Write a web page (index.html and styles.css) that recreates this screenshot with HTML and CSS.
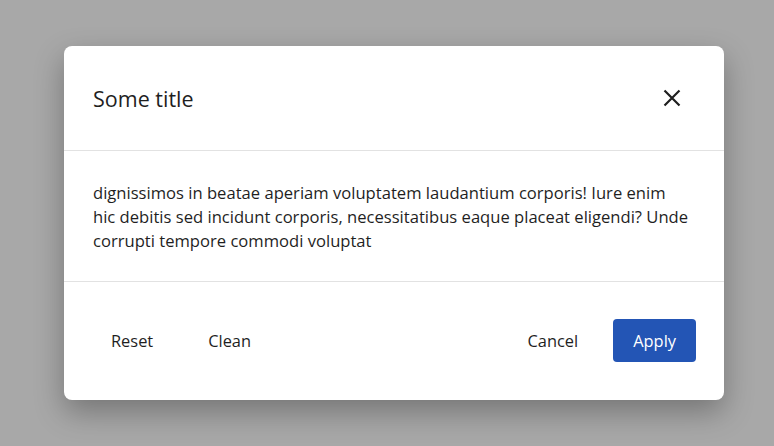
FILE: index.html
```html
<!DOCTYPE html>
<html>
<head>
    <title>Dialog</title>
    <link rel="stylesheet" href="styles.css">
</head>
<body>
    <div class="overlay">
        <div class="dialog">
            <div class="dialog-header">
                <h2 class="dialog-title">Some title</h2>
                <button class="close-btn" aria-label="Close">
                    <svg width="18" height="18" viewBox="0 0 18 18">
                        <path d="M1.5 1.5 L16.5 16.5 M16.5 1.5 L1.5 16.5" stroke="#1f1f1f" stroke-width="2.2" fill="none"/>
                    </svg>
                </button>
            </div>
            <div class="dialog-body">
                dignissimos in beatae aperiam voluptatem laudantium corporis! Iure enim hic debitis sed incidunt corporis, necessitatibus eaque placeat eligendi? Unde corrupti tempore commodi voluptat
            </div>
            <div class="dialog-footer">
                <div class="footer-group footer-left">
                    <button class="btn btn-text">Reset</button>
                    <button class="btn btn-text">Clean</button>
                </div>
                <div class="footer-group">
                    <button class="btn btn-text">Cancel</button>
                    <button class="btn btn-primary">Apply</button>
                </div>
            </div>
        </div>
    </div>
</body>
</html>
```

FILE: styles.css
```css
body {
    margin: 0;
    height: 100vh;
    background: #a8a8a8;
    font-family: "Open Sans", "Noto Sans", sans-serif;
    color: #1f1f1f;
    overflow: hidden;
}

.overlay {
    display: flex;
    padding: 46px 0 0 64px;
}

.dialog {
    width: 660px;
    background: #fff;
    border-radius: 8px;
    box-shadow: 0 12px 30px rgba(0, 0, 0, 0.3);
}

.dialog-header {
    display: flex;
    align-items: center;
    justify-content: space-between;
    height: 104px;
    padding: 0 43px 0 29px;
    border-bottom: 1px solid #e2e2e2;
}

.dialog-title {
    margin: 0;
    font-size: 21.5px;
    font-weight: 400;
}

.close-btn {
    display: flex;
    padding: 0;
    border: none;
    background: none;
    cursor: pointer;
}

.dialog-body {
    padding: 30px 32px 28px 29px;
    font-size: 16.6px;
    line-height: 24px;
    border-bottom: 1px solid #e2e2e2;
}

.dialog-footer {
    display: flex;
    justify-content: space-between;
    align-items: center;
    padding: 37px 28px 38px 29px;
}

.footer-group {
    display: flex;
    gap: 17px;
    align-items: center;
}

.footer-left {
    gap: 19px;
}

.btn {
    height: 43px;
    padding: 0 18px;
    border: none;
    border-radius: 4px;
    font-family: inherit;
    font-size: 16.4px;
    color: #1f1f1f;
    background: none;
    cursor: pointer;
}

.btn-primary {
    background: #2355b5;
    color: #fff;
    padding: 0 20px;
}
```
